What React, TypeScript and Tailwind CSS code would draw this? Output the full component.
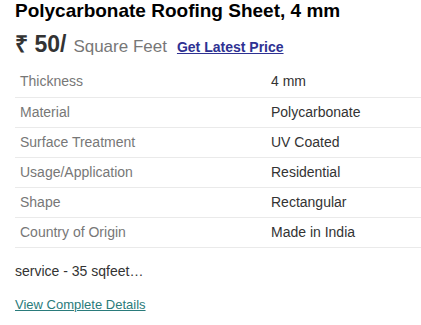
const specs: [string, string][] = [
  ["Thickness", "4 mm"],
  ["Material", "Polycarbonate"],
  ["Surface Treatment", "UV Coated"],
  ["Usage/Application", "Residential"],
  ["Shape", "Rectangular"],
  ["Country of Origin", "Made in India"],
];

export default function App() {
  return (
    <div className="w-[421px] h-[325px] bg-white pl-[15px] font-['Liberation_Sans',Arial,sans-serif] overflow-hidden">
      {/* Product title */}
      <h2 className="text-[19px] leading-[21px] font-bold text-black">
        Polycarbonate Roofing Sheet, 4 mm
      </h2>

      {/* Price row */}
      <div className="flex items-baseline mt-[6px] h-[28px]">
        <span className="text-[23px] font-bold text-[#333]">₹ 50/</span>
        <span className="ml-[7px] text-[17px] text-[#777]">Square Feet</span>
        <a href="#" className="ml-[10px] text-[14px] font-bold text-[#2e3192] underline">
          Get Latest Price
        </a>
      </div>

      {/* Spec table */}
      <table className="mt-[12px] w-[420px] text-[14px] border-collapse">
        <tbody>
          {specs.map(([k, v]) => (
            <tr key={k} className="h-[30px] border-b border-[#eaeaea]">
              <td className="w-[251px] pl-[5px] text-[#777]">{k}</td>
              <td className="pl-[5px] text-[#333]">{v}</td>
            </tr>
          ))}
        </tbody>
      </table>

      <p className="mt-[14px] text-[14px] leading-[18px] text-[#333]">service - 35 sqfeet…</p>

      <a href="#" className="block mt-[16px] text-[13px] leading-[18px] text-[#2a7b7b] underline">
        View Complete Details
      </a>
    </div>
  );
}
